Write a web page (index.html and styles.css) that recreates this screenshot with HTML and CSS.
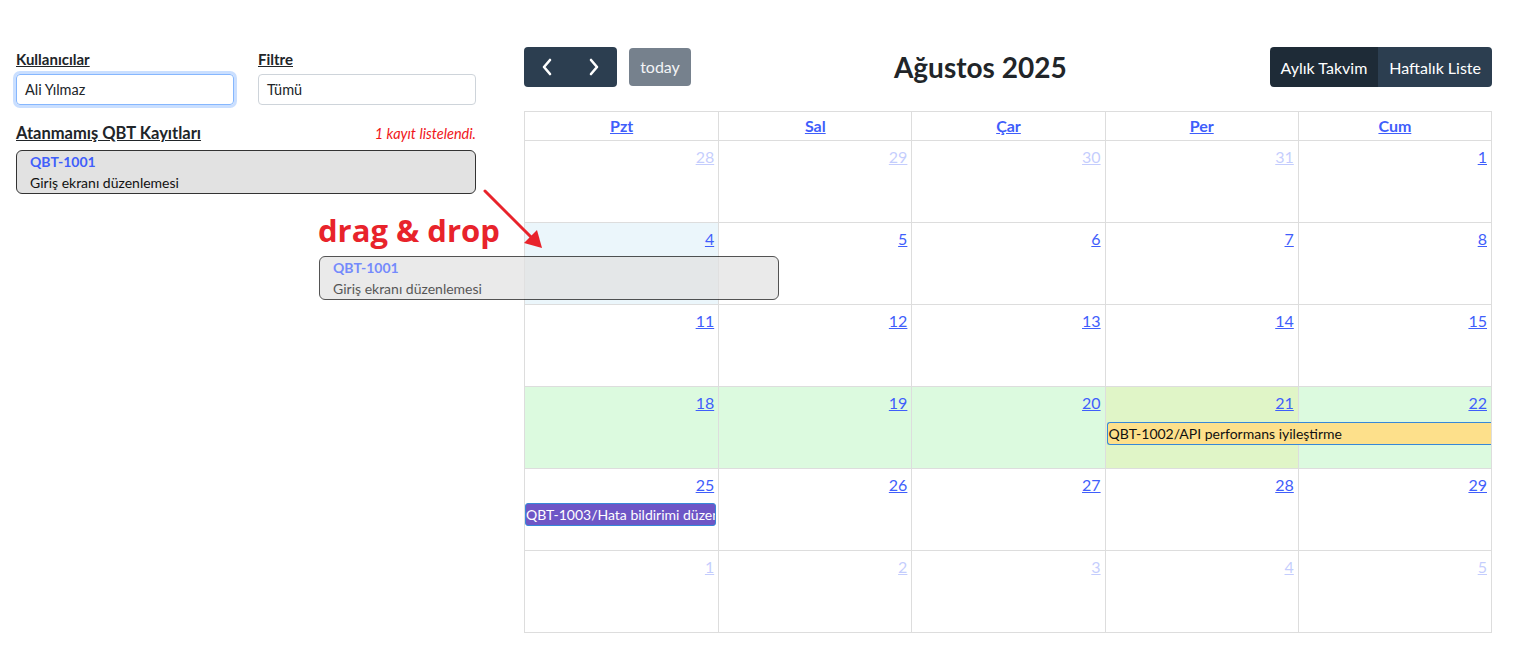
FILE: index.html
```html
<!DOCTYPE html>
<html lang="tr">
<head>
<meta charset="utf-8">
<title>QBT Takvim</title>
<link rel="stylesheet" href="styles.css">
</head>
<body>
<div class="app">
  <aside class="sidebar">
    <div class="filters">
      <div class="field">
        <label class="field-label">Kullanıcılar</label>
        <div class="input input-focus">Ali Yılmaz</div>
      </div>
      <div class="field">
        <label class="field-label">Filtre</label>
        <div class="input">Tümü</div>
      </div>
    </div>
    <div class="list-head">
      <span class="list-title">Atanmamış QBT Kayıtları</span>
      <span class="list-count">1 kayıt listelendi.</span>
    </div>
    <div class="task-card">
      <div class="task-code">QBT-1001</div>
      <div class="task-desc">Giriş ekranı düzenlemesi</div>
    </div>
  </aside>

  <main class="calendar">
    <div class="toolbar">
      <div class="toolbar-left">
        <div class="btn-group">
          <button class="btn btn-icon" aria-label="prev">
            <svg width="12" height="18" viewBox="0 0 12 18"><path d="M9 2 L3 9 L9 16" fill="none" stroke="#fff" stroke-width="2.6" stroke-linecap="round" stroke-linejoin="round"/></svg>
          </button>
          <button class="btn btn-icon" aria-label="next">
            <svg width="12" height="18" viewBox="0 0 12 18"><path d="M3 2 L9 9 L3 16" fill="none" stroke="#fff" stroke-width="2.6" stroke-linecap="round" stroke-linejoin="round"/></svg>
          </button>
        </div>
        <button class="btn btn-today">today</button>
      </div>
      <h2 class="title">Ağustos 2025</h2>
      <div class="btn-group">
        <button class="btn btn-view active">Aylık Takvim</button>
        <button class="btn btn-view">Haftalık Liste</button>
      </div>
    </div>

    <div class="grid">
      <div class="head-row">
        <div class="head-cell"><a>Pzt</a></div>
        <div class="head-cell"><a>Sal</a></div>
        <div class="head-cell"><a>Çar</a></div>
        <div class="head-cell"><a>Per</a></div>
        <div class="head-cell"><a>Cum</a></div>
      </div>

      <div class="week">
        <div class="day other"><a>28</a></div>
        <div class="day other"><a>29</a></div>
        <div class="day other"><a>30</a></div>
        <div class="day other"><a>31</a></div>
        <div class="day"><a>1</a></div>
      </div>
      <div class="week">
        <div class="day highlight"><a>4</a></div>
        <div class="day"><a>5</a></div>
        <div class="day"><a>6</a></div>
        <div class="day"><a>7</a></div>
        <div class="day"><a>8</a></div>
      </div>
      <div class="week">
        <div class="day"><a>11</a></div>
        <div class="day"><a>12</a></div>
        <div class="day"><a>13</a></div>
        <div class="day"><a>14</a></div>
        <div class="day"><a>15</a></div>
      </div>
      <div class="week current">
        <div class="day"><a>18</a></div>
        <div class="day"><a>19</a></div>
        <div class="day"><a>20</a></div>
        <div class="day today"><a>21</a></div>
        <div class="day"><a>22</a></div>
        <div class="event event-yellow">QBT-1002/API performans iyileştirme</div>
      </div>
      <div class="week">
        <div class="day"><a>25</a></div>
        <div class="day"><a>26</a></div>
        <div class="day"><a>27</a></div>
        <div class="day"><a>28</a></div>
        <div class="day"><a>29</a></div>
        <div class="event event-purple">QBT-1003/Hata bildirimi düzenlemesi</div>
      </div>
      <div class="week">
        <div class="day other"><a>1</a></div>
        <div class="day other"><a>2</a></div>
        <div class="day other"><a>3</a></div>
        <div class="day other"><a>4</a></div>
        <div class="day other"><a>5</a></div>
      </div>
    </div>
  </main>
</div>

<div class="drag-hint">drag &amp; drop</div>
<svg class="drag-arrow" width="70" height="70" viewBox="0 0 70 70">
  <line x1="2" y1="2" x2="50" y2="50" stroke="#e8232b" stroke-width="3" stroke-linecap="round"/>
  <polygon points="59,59 41,54 54,41" fill="#e8232b"/>
</svg>
<div class="task-card drag-mirror">
  <div class="task-code">QBT-1001</div>
  <div class="task-desc">Giriş ekranı düzenlemesi</div>
</div>
</body>
</html>
```

FILE: styles.css
```css
* { box-sizing: border-box; }

body {
  margin: 0;
  font-family: "Lato", "Noto Sans", sans-serif;
  color: #212529;
  background: #fff;
  position: relative;
}

.app {
  display: flex;
  gap: 48px;
  padding: 47px 25px 0 16px;
}

/* ---------- sidebar ---------- */
.sidebar {
  width: 460px;
  flex: none;
}

.filters {
  display: grid;
  grid-template-columns: 1fr 1fr;
  column-gap: 24px;
}

.field-label {
  display: block;
  font-weight: 700;
  font-size: 15px;
  line-height: 22px;
  text-decoration: underline;
  margin-bottom: 5px;
  padding-top: 1px;
}

.input {
  height: 31px;
  margin-top: -1px;
  border: 1px solid #ced4da;
  border-radius: 4px;
  padding: 0 8px;
  font-size: 14.5px;
  line-height: 29px;
  color: #212529;
}

.input-focus {
  border-color: #86b7fe;
  box-shadow: 0 0 0 3px rgba(13, 110, 253, 0.22);
}

.list-head {
  display: flex;
  justify-content: space-between;
  align-items: baseline;
  margin-top: 17px;
  line-height: 22px;
}

.list-title {
  font-weight: 700;
  font-size: 16.5px;
  text-decoration: underline;
}

.list-count {
  font-style: italic;
  font-size: 14.5px;
  color: #f0161a;
}

.task-card {
  margin-top: 5px;
  border: 1px solid #333;
  border-radius: 6px;
  background: #e2e2e2;
  padding: 0 13px;
  line-height: 21px;
  font-size: 14px;
}

.task-code {
  font-weight: 700;
  color: #3f5efb;
}

.task-desc {
  color: #111;
}

/* ---------- drag overlay ---------- */
.drag-hint {
  position: absolute;
  left: 318px;
  top: 210px;
  font-family: "Open Sans", "Noto Sans", sans-serif;
  font-weight: 700;
  font-size: 31px;
  line-height: 40px;
  color: #e8232b;
}

.drag-arrow {
  position: absolute;
  left: 483px;
  top: 189px;
}

.drag-mirror {
  position: absolute;
  left: 319px;
  top: 256px;
  width: 460px;
  height: 44px;
  margin: 0;
  opacity: 0.72;
  border-color: #111;
}

/* ---------- calendar ---------- */
.calendar {
  flex: 1;
  min-width: 0;
}

.toolbar {
  display: flex;
  justify-content: space-between;
  align-items: center;
  height: 40px;
  margin-bottom: 24px;
}

.toolbar-left {
  display: flex;
  align-items: center;
  gap: 12px;
}

.title {
  margin: 0;
  font-size: 28px;
  font-weight: 700;
  color: #212529;
}

.btn-group {
  display: flex;
  border-radius: 4px;
  overflow: hidden;
}

.btn {
  border: 0;
  font-family: inherit;
  color: #fff;
  background: #2c3e50;
  cursor: pointer;
}

.btn-icon {
  width: 46.5px;
  height: 40px;
  display: flex;
  align-items: center;
  justify-content: center;
  padding: 0;
}

.btn-today {
  height: 38px;
  width: 62px;
  border-radius: 4px;
  font-size: 16px;
  padding: 0 0 2px;
  background: #76818d;
  color: #f2f4f6;
}

.btn-view {
  height: 40px;
  font-size: 16px;
  padding: 0 11px;
}

.btn-view.active {
  background: #1e2b37;
}

.grid {
  border: 1px solid #ddd;
}

.head-row,
.week {
  display: grid;
  grid-template-columns: repeat(5, minmax(0, 1fr));
}

.head-row {
  height: 29px;
  border-bottom: 1px solid #ddd;
}

.head-cell {
  text-align: center;
  font-weight: 700;
  font-size: 16px;
  line-height: 28px;
  border-left: 1px solid #ddd;
}

.head-cell:first-child,
.day:first-child {
  border-left: 0;
}

.head-cell a,
.day a {
  color: #3f5efb;
  text-decoration: underline;
}

.week {
  height: 82px;
  border-bottom: 1px solid #ddd;
}

.week:last-child {
  height: 81px;
  border-bottom: 0;
}

.day {
  grid-row: 1;
  border-left: 1px solid #ddd;
  text-align: right;
  padding: 4px 4px 0 0;
  font-size: 16px;
  line-height: 24px;
}

.day:nth-child(1) { grid-column: 1; }
.day:nth-child(2) { grid-column: 2; }
.day:nth-child(3) { grid-column: 3; }
.day:nth-child(4) { grid-column: 4; }
.day:nth-child(5) { grid-column: 5; }

.day.other a {
  opacity: 0.3;
}

.day.highlight {
  background: #ebf6fb;
}

.week.current {
  background: #dcfadf;
}

.day.today {
  background: rgba(255, 220, 40, 0.13);
}

.event {
  grid-row: 1;
  align-self: start;
  margin-top: 35px;
  height: 23px;
  font-size: 14px;
  line-height: 21px;
  white-space: nowrap;
  overflow: hidden;
  border: 1px solid #3788d8;
  border-radius: 3px;
  padding: 0 1px;
  position: relative;
}

.event-yellow {
  grid-column: 4 / 6;
  margin-left: 2px;
  background: #fde08b;
  color: #111;
  border-right: 0;
  border-top-right-radius: 0;
  border-bottom-right-radius: 0;
}

.event-purple {
  grid-column: 1 / 2;
  margin: 34px 2px 0 0;
  padding: 0;
  background: #6e56c6;
  color: #fff;
  text-overflow: clip;
}
```
